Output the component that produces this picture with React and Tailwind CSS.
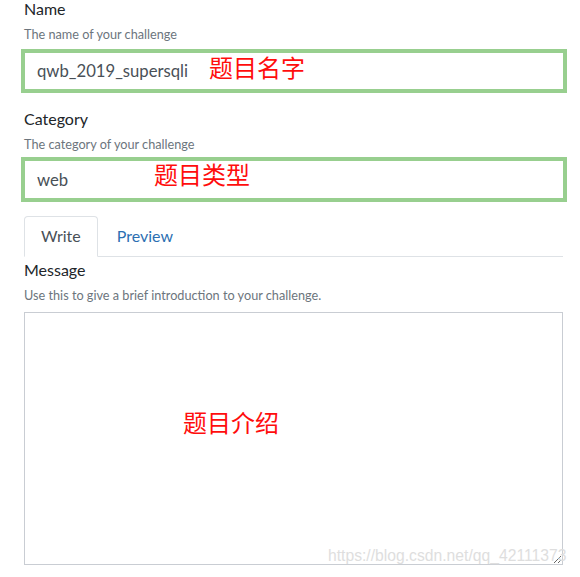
import { useState } from "react";

const labelCls = "text-[16px] leading-[18px] text-[#212529]";
const helpCls = "mt-2 text-[12.7px] leading-[16px] text-[#6c757d]";
const noteCls =
  "absolute text-[24px] leading-[24px] text-[#ff0d0d] whitespace-nowrap";
const cjk = { fontFamily: '"Noto Sans CJK SC", "Noto Sans", sans-serif' };

function MarkedInput({ value, note, noteLeft, noteTop, height, className }) {
  return (
    <div
      className={`relative -ml-[3px] -mr-[4px] flex items-center border-4 border-[#98cf8f] bg-white pl-3 ${height} ${className}`}
    >
      <span className="text-[16.7px] leading-[24px] text-[#495057]">{value}</span>
      <span className={`${noteCls} ${noteLeft} ${noteTop}`} style={cjk}>
        {note}
      </span>
    </div>
  );
}

export default function App() {
  const [tab, setTab] = useState("write");

  return (
    <div
      className="relative h-[577px] w-full overflow-hidden bg-white pl-6 pr-[17px]"
      style={{ fontFamily: 'Lato, "Open Sans", sans-serif' }}
    >
      <div className={labelCls}>Name</div>
      <div className={helpCls}>The name of your challenge</div>
      <MarkedInput
        value="qwb_2019_supersqli"
        note="题目名字"
        noteLeft="left-[184px]"
        noteTop="top-[2px]"
        height="h-[44px]"
        className="mt-[7px]"
      />

      <div className={`${labelCls} mt-[17px]`}>Category</div>
      <div className={helpCls}>The category of your challenge</div>
      <MarkedInput
        value="web"
        note="题目类型"
        noteLeft="left-[129px]"
        noteTop="top-[1px]"
        height="h-[45px]"
        className="mt-[5px]"
      />

      <div className="mt-[14px] flex border-b border-[#dee2e6]">
        <button
          type="button"
          onClick={() => setTab("write")}
          className={`-mb-px rounded-t border px-4 pt-[7px] pb-[8px] text-[16px] leading-[24px] ${
            tab === "write"
              ? "border-[#dee2e6] border-b-white bg-white text-[#495057]"
              : "border-transparent text-[#2c6fb2]"
          }`}
        >
          Write
        </button>
        <button
          type="button"
          onClick={() => setTab("preview")}
          className={`-mb-px ml-[2px] rounded-t border px-4 pt-[7px] pb-[8px] text-[16px] leading-[24px] ${
            tab === "preview"
              ? "border-[#dee2e6] border-b-white bg-white text-[#495057]"
              : "border-transparent text-[#2c6fb2]"
          }`}
        >
          Preview
        </button>
      </div>

      <div className={`${labelCls} mt-1`}>Message</div>
      <div className={helpCls}>
        Use this to give a brief introduction to your challenge.
      </div>
      <div className="relative mt-[9px]">
        <textarea
          readOnly
          className="block h-[253px] w-full border border-[#c9cdd3] bg-white outline-none"
        />
        <span className={`${noteCls} left-[159px] top-[98px]`} style={cjk}>
          题目介绍
        </span>
      </div>

      <div
        className="pointer-events-none absolute left-[328px] top-[547px] whitespace-nowrap text-[15.7px] leading-[18px] text-[#dedede]"
        style={{ fontFamily: '"Liberation Sans", Arial, sans-serif' }}
      >
        https://blog.csdn.net/qq_42111373
      </div>
    </div>
  );
}
